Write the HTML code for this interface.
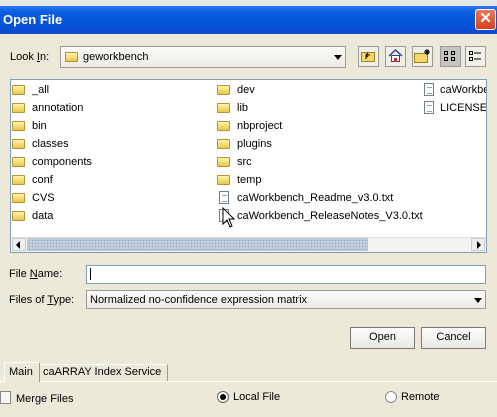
<!DOCTYPE html>
<html><head><meta charset="utf-8"><style>
*{margin:0;padding:0;box-sizing:border-box}
body{width:497px;height:417px;overflow:hidden;background:#ece9d8;font-family:"Liberation Sans",sans-serif;font-size:11px;color:#000;position:relative}
.a{position:absolute;white-space:nowrap}
.title{left:0;top:6px;width:497px;height:28px;background:linear-gradient(#2d7bf0 0%,#0a5ee0 20%,#0454d8 60%,#0a4ccf 90%,#1a50c0 100%)}
.ttext{left:3px;top:12px;color:#fff;font-weight:bold;font-size:13px}
.close{left:475px;top:9px;width:21px;height:21px;background:linear-gradient(#e87a5a,#d6401c);border:1px solid #fff;border-radius:3px;color:#fff;font-size:15px;font-weight:bold;text-align:center;line-height:18px}
.combo{background:#fff;border:1px solid #7f9db9}
.btn{border:1px solid #7a7a7a;background:linear-gradient(#fdfdfd,#e8e8e4);text-align:center;line-height:19px}
.folder{width:13px;height:10px;background:linear-gradient(#fff3b0,#e8c84c);border:1px solid #b49530;border-radius:1px}
.doc{width:10px;height:13px;background:#fff;border:1px solid #6f7f90}
.doc:after{content:"";position:absolute;left:2px;top:3px;width:5px;height:5px;border-top:1px solid #8aa;border-bottom:1px solid #8aa}
.tb{width:21px;height:21px;border:1px solid #9a9a9a;background:#f0efe8}
.t{font-size:11px}
</style></head><body>
<div class="a" style="left:0;top:0;width:497px;height:6px;background:#e6e8ee"></div>
<div class="a title"></div>
<div class="a ttext">Open File</div>
<div class="a close">✕</div>

<div class="a t" style="left:10px;top:51px">Look <u>I</u>n:</div>
<div class="a combo" style="left:60px;top:46px;width:286px;height:22px;border-color:#9a9a9a;background:linear-gradient(#fbfbf9,#ecebe6)"></div>
<div class="a folder" style="left:65px;top:52px"></div>
<div class="a t" style="left:83px;top:51px">geworkbench</div>
<div class="a" style="left:334px;top:55px;width:0;height:0;border-left:4px solid transparent;border-right:4px solid transparent;border-top:5px solid #000"></div>

<div class="a tb" style="left:358px;top:46px"></div>
<svg class="a" style="left:361px;top:50px" width="15" height="13"><rect x="0.5" y="2.5" width="13" height="9" fill="#f3d768" stroke="#a08020"/><path d="M5 9V5h4M5 5l2-2M5 5l2 2" stroke="#000" fill="none"/></svg>
<div class="a tb" style="left:385px;top:46px"></div>
<svg class="a" style="left:388px;top:49px" width="15" height="14"><path d="M1 7L7.5 1L14 7" stroke="#304090" stroke-width="1.5" fill="none"/><rect x="3.5" y="6.5" width="8" height="6" fill="#fff" stroke="#304090"/><rect x="6" y="9" width="3" height="4" fill="#c03030"/></svg>
<div class="a tb" style="left:412px;top:46px"></div>
<svg class="a" style="left:414px;top:48px" width="17" height="16"><rect x="0.5" y="5.5" width="13" height="9" fill="#f3d768" stroke="#a08020"/><path d="M13 1v6M10 4h6M11 2l4 4M15 2l-4 4" stroke="#000"/></svg>
<div class="a tb" style="left:440px;top:46px;background:#c4c4c0"></div>
<svg class="a" style="left:443px;top:50px" width="15" height="13"><g fill="none" stroke="#000"><rect x="1.5" y="1.5" width="3" height="3"/><rect x="8.5" y="1.5" width="3" height="3"/><rect x="1.5" y="7.5" width="3" height="3"/><rect x="8.5" y="7.5" width="3" height="3"/></g></svg>
<div class="a tb" style="left:465px;top:46px"></div>
<svg class="a" style="left:468px;top:50px" width="15" height="13"><g fill="none" stroke="#000"><rect x="1.5" y="1.5" width="3" height="3"/><rect x="1.5" y="7.5" width="3" height="3"/><path d="M6 3h7M6 9h7"/></g></svg>

<div class="a" style="left:10px;top:79px;width:477px;height:174px;background:#fff;border:1px solid #7f9db9"></div>
<div class="a" style="left:11px;top:237px;width:475px;height:15px;background:#f3f3ef;border-top:1px solid #ddd"></div>
<div class="a" style="left:12px;top:238px;width:14px;height:13px;background:#eee;border:1px solid #ccc"></div>
<div class="a" style="left:16px;top:241px;width:0;height:0;border-top:4px solid transparent;border-bottom:4px solid transparent;border-right:4px solid #000"></div>
<div class="a" style="left:27px;top:238px;width:341px;height:13px;background-color:#c8d4e4;background-image:radial-gradient(#9fb0c8 0.8px,transparent 1px);background-size:3px 3px;border:1px solid #b8c4d4"></div>
<div class="a" style="left:471px;top:238px;width:14px;height:13px;background:#eee;border:1px solid #ccc"></div>
<div class="a" style="left:477px;top:241px;width:0;height:0;border-top:4px solid transparent;border-bottom:4px solid transparent;border-left:4px solid #000"></div>

<div class="a t" style="left:9px;top:268px">File <u>N</u>ame:</div>
<div class="a combo" style="left:86px;top:265px;width:400px;height:19px"></div>
<div class="a" style="left:90px;top:268px;width:1px;height:12px;background:#000"></div>
<div class="a t" style="left:9px;top:294px">Files of <u>T</u>ype:</div>
<div class="a combo" style="left:86px;top:290px;width:400px;height:19px;border-color:#9a9a9a;background:linear-gradient(#fbfbf9,#ecebe6)"></div>
<div class="a t" style="left:90px;top:294px">Normalized no-confidence expression matrix</div>
<div class="a" style="left:474px;top:298px;width:0;height:0;border-left:4px solid transparent;border-right:4px solid transparent;border-top:5px solid #000"></div>

<div class="a btn t" style="left:350px;top:327px;width:65px;height:22px">Open</div>
<div class="a btn t" style="left:421px;top:327px;width:65px;height:22px">Cancel</div>

<div class="a" style="left:0;top:381px;width:497px;height:1px;background:#fff"></div>
<div class="a" style="left:4px;top:362px;width:36px;height:20px;background:#ece9d8;border:1px solid #fff;border-bottom:none;border-right:1px solid #999"></div>
<div class="a t" style="left:9px;top:366px">Main</div>
<div class="a" style="left:40px;top:364px;width:128px;height:17px;border-top:1px solid #fff;border-right:1px solid #999"></div>
<div class="a t" style="left:43px;top:366px">caARRAY Index Service</div>

<div class="a" style="left:0;top:391px;width:11px;height:13px;border:1px solid #888;background:#f6f6f2"></div>
<div class="a t" style="left:16px;top:393px">Merge Files</div>
<div class="a" style="left:217px;top:391px;width:12px;height:12px;border:1px solid #666;border-radius:50%;background:#fff"></div>
<div class="a" style="left:220px;top:394px;width:6px;height:6px;border-radius:50%;background:#000"></div>
<div class="a t" style="left:233px;top:391px">Local File</div>
<div class="a" style="left:385px;top:391px;width:12px;height:12px;border:1px solid #888;border-radius:50%;background:#fff"></div>
<div class="a t" style="left:401px;top:391px">Remote</div>

<div class="a folder" style="left:12px;top:85px"></div><div class="a t" style="left:32px;top:84px">_all</div>
<div class="a folder" style="left:12px;top:103px"></div><div class="a t" style="left:32px;top:102px">annotation</div>
<div class="a folder" style="left:12px;top:121px"></div><div class="a t" style="left:32px;top:120px">bin</div>
<div class="a folder" style="left:12px;top:139px"></div><div class="a t" style="left:32px;top:138px">classes</div>
<div class="a folder" style="left:12px;top:157px"></div><div class="a t" style="left:32px;top:156px">components</div>
<div class="a folder" style="left:12px;top:175px"></div><div class="a t" style="left:32px;top:174px">conf</div>
<div class="a folder" style="left:12px;top:193px"></div><div class="a t" style="left:32px;top:192px">CVS</div>
<div class="a folder" style="left:12px;top:211px"></div><div class="a t" style="left:32px;top:210px">data</div>

<div class="a folder" style="left:217px;top:85px"></div><div class="a t" style="left:237px;top:84px">dev</div>
<div class="a folder" style="left:217px;top:103px"></div><div class="a t" style="left:237px;top:102px">lib</div>
<div class="a folder" style="left:217px;top:121px"></div><div class="a t" style="left:237px;top:120px">nbproject</div>
<div class="a folder" style="left:217px;top:139px"></div><div class="a t" style="left:237px;top:138px">plugins</div>
<div class="a folder" style="left:217px;top:157px"></div><div class="a t" style="left:237px;top:156px">src</div>
<div class="a folder" style="left:217px;top:175px"></div><div class="a t" style="left:237px;top:174px">temp</div>
<div class="a doc" style="left:219px;top:191px"></div><div class="a t" style="left:237px;top:192px">caWorkbench_Readme_v3.0.txt</div>
<div class="a doc" style="left:219px;top:209px"></div><div class="a t" style="left:237px;top:210px">caWorkbench_ReleaseNotes_V3.0.txt</div>
<svg class="a" style="left:222px;top:207px" width="14" height="22"><path d="M1 1V17L5 13L8 20L10 19L7 12H12Z" fill="#fff" stroke="#000"/></svg>

<div class="a doc" style="left:424px;top:83px"></div><div class="a t" style="left:440px;top:84px;width:46px;overflow:hidden">caWorkbench</div>
<div class="a doc" style="left:424px;top:101px"></div><div class="a t" style="left:440px;top:102px;width:46px;overflow:hidden">LICENSE.txt</div>
</body></html>
